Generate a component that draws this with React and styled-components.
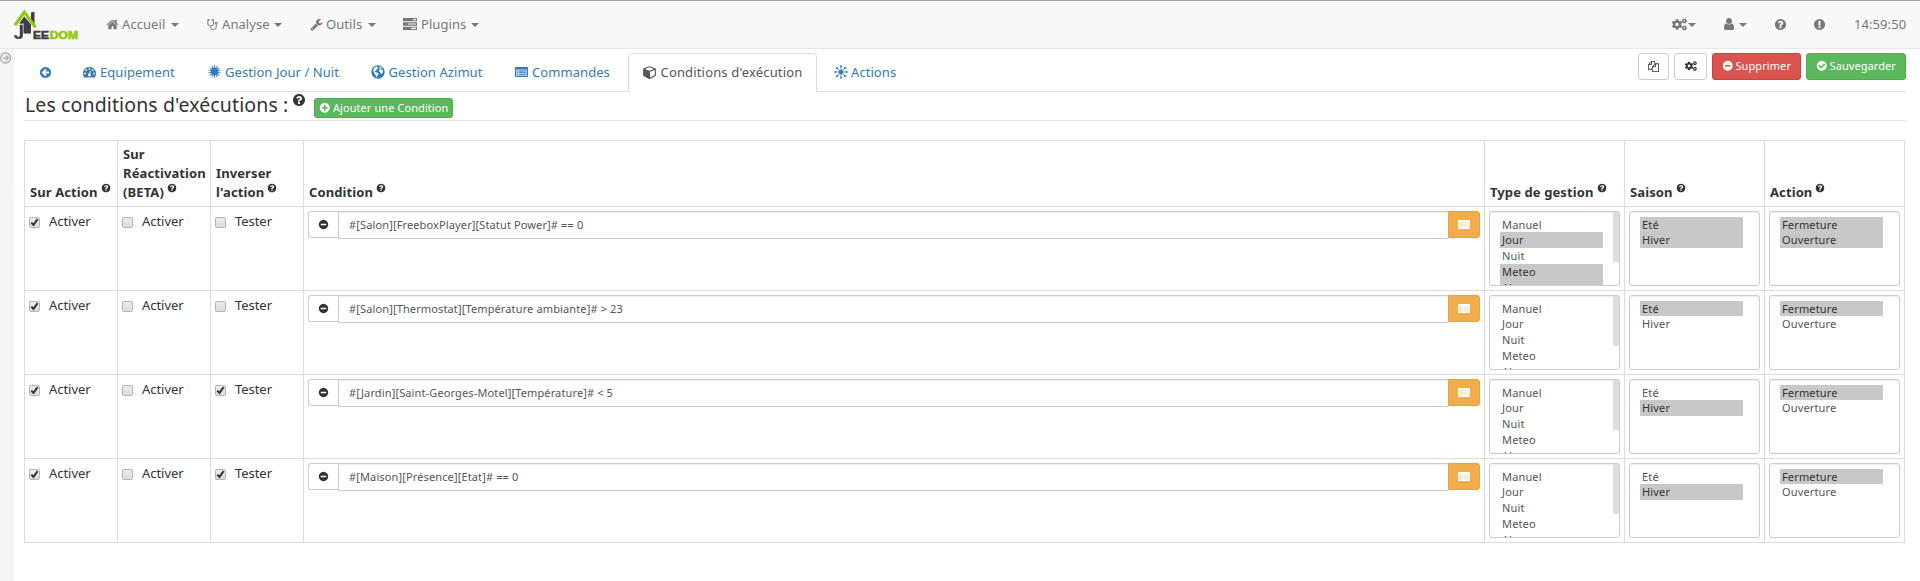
import React from 'react';
import styled, { createGlobalStyle, css } from 'styled-components';
import { FaCogs } from 'react-icons/fa';

const GlobalStyle = createGlobalStyle`
  *, *::before, *::after { box-sizing: border-box; }
  body {
    margin: 0;
    background: #fff;
    color: #333;
    font-family: "Noto Sans", "Open Sans", sans-serif;
    font-size: 13px;
    line-height: 19px;
    letter-spacing: 0.07px;
    overflow: hidden;
  }
`;

/* ---------- icons ---------- */

const Svg = styled.svg`
  display: block;
  flex: none;
  fill: currentColor;
`;

const DISC = 'M1664 896q0 209-103 385.5t-279.5 279.5-385.5 103-385.5-103-279.5-279.5-103-385.5 103-385.5 279.5-279.5 385.5-103 385.5 103 279.5 279.5 103 385.5z';

const GLYPHS = {
  home: 'M1472 992v480q0 26-19 45t-45 19h-384v-384h-256v384h-384q-26 0-45-19t-19-45v-480q0-1 .5-3t.5-3l575-474 575 474q1 2 1 6zm223-69l-62 74q-8 9-21 11h-3q-13 0-21-7l-692-577-692 577q-12 8-24 7-13-2-21-11l-62-74q-8-10-7-23.5t11-21.5l719-599q32-26 76-26t76 26l244 204v-195q0-14 9-23t23-9h192q14 0 23 9t9 23v408l219 182q10 8 11 21.5t-7 23.5z',
  stethoscope: 'M1472 704q0-26-19-45t-45-19-45 19-19 45 19 45 45 19 45-19 19-45zm128 0q0 60-35 110t-93 71v395q0 159-131 271.5t-317 112.5-317-112.5-131-271.5v-132q-164-20-274-128t-110-252v-512q0-26 19-45t45-19q6 0 16 2 17-30 47-48t65-18q53 0 90.5 37.5t37.5 90.5-37.5 90.5-90.5 37.5q-33 0-64-18v402q0 106 94 181t226 75 226-75 94-181v-402q-31 18-64 18-53 0-90.5-37.5t-37.5-90.5 37.5-90.5 90.5-37.5q35 0 65 18t47 48q10-2 16-2 26 0 45 19t19 45v512q0 144-110 252t-274 128v132q0 106 94 181t226 75 226-75 94-181v-395q-58-21-93-71t-35-110q0-80 56-136t136-56 136 56 56 136z',
  wrench: 'M448 1472q0-26-19-45t-45-19-45 19-19 45 19 45 45 19 45-19 19-45zm644-420l-682 682q-37 37-90 37-52 0-91-37l-106-108q-38-36-38-90 0-53 38-91l681-681q39 98 114.5 173.5t173.5 114.5zm634-435q0 39-23 106-47 134-164.5 217.5t-258.5 83.5q-185 0-316.5-131.5t-131.5-316.5 131.5-316.5 316.5-131.5q58 0 121.5 16.5t107.5 46.5q16 11 16 28t-16 28l-293 169v224l193 107q5-3 79-48.5t135.5-81 70.5-35.5q15 0 23.5 10t8.5 25z',
  user: 'M1536 1399q0 109-62.5 187t-150.5 78h-854q-88 0-150.5-78t-62.5-187q0-85 8.5-160.5t31.5-152 58.5-131 94-89 134.5-34.5q131 128 313 128t313-128q76 0 134.5 34.5t94 89 58.5 131 31.5 152 8.5 160.5zm-256-887q0 159-112.5 271.5t-271.5 112.5-271.5-112.5-112.5-271.5 112.5-271.5 271.5-112.5 271.5 112.5 112.5 271.5z',
  question: 'M1024 1376v-192q0-14-9-23t-23-9h-192q-14 0-23 9t-9 23v192q0 14 9 23t23 9h192q14 0 23-9t9-23zm256-672q0-88-55.5-163t-138.5-116-170-41q-243 0-371 213-15 24 8 42l132 100q7 6 19 6 16 0 25-12 53-68 86-92 34-24 86-24 48 0 85.5 26t37.5 59q0 38-20 61t-68 45q-63 28-115.5 86.5t-52.5 125.5v36q0 14 9 23t23 9h192q14 0 23-9t9-23q0-19 21.5-49.5t54.5-49.5q32-18 49-28.5t46-35 44.5-48 28-60.5 12.5-81z' + DISC,
  exclamation: 'M1024 1375v-190q0-14-9-23.5t-22-9.5h-192q-13 0-23 10t-10 23v190q0 13 10 23t23 10h192q13 0 22-9.5t9-23.5zm-2-344l18-621q0-12-10-18-10-8-24-8h-220q-14 0-24 8-10 6-10 18l17 621q0 10 10 17.5t24 7.5h185q14 0 23.5-7.5t10.5-17.5z' + DISC,
  plus: 'M1344 960v-128q0-26-19-45t-45-19h-256v-256q0-26-19-45t-45-19h-128q-26 0-45 19t-19 45v256h-256q-26 0-45 19t-19 45v128q0 26 19 45t45 19h256v256q0 26 19 45t45 19h128q26 0 45-19t19-45v-256h256q26 0 45-19t19-45z' + DISC,
  minus: 'M1344 960v-128q0-26-19-45t-45-19h-768q-26 0-45 19t-19 45v128q0 26 19 45t45 19h768q26 0 45-19t19-45z' + DISC,
  check: 'M1412 734q0-28-18-46l-91-90q-19-19-45-19t-45 19l-408 407-226-226q-19-19-45-19t-45 19l-91 90q-18 18-18 46 0 27 18 45l362 362q19 19 45 19 27 0 46-19l543-543q18-18 18-45z' + DISC,
  back: 'M1408 960v-128q0-26-19-45t-45-19h-502l189-189q19-19 19-45t-19-45l-91-91q-18-18-45-18t-45 18l-362 362-91 91q-18 18-18 45t18 45l91 91 362 362q18 18 45 18t45-18l91-91q18-18 18-45t-18-45l-189-189h502q26 0 45-19t19-45z' + DISC,
  files: 'M1696 384q40 0 68 28t28 68v1216q0 40-28 68t-68 28h-960q-40 0-68-28t-28-68v-288h-544q-40 0-68-28t-28-68v-672q0-40 20-88t48-76l408-408q28-28 76-48t88-20h416q40 0 68 28t28 68v328q68-40 128-40h416zm-544 213l-299 299h299v-299zm-640-384l-299 299h299v-299zm196 647l316-316v-416h-384v416q0 40-28 68t-68 28h-416v640h512v-256q0-40 20-88t48-76zm956 804v-1152h-384v416q0 40-28 68t-68 28h-416v640h896z',
};

const Glyph = ({ name, size = 14 }) => (
  <Svg width={size} height={size} viewBox="0 0 1792 1792">
    <path fillRule="evenodd" d={GLYPHS[name]} />
  </Svg>
);

const TasksIcon = () => (
  <Svg width="14" height="12" viewBox="0 0 14 12">
    <path fillRule="evenodd" d="M.5 0h13q.5 0 .5.5v2.3q0 .5-.5.5H.5q-.5 0-.5-.5V.5Q0 0 .5 0zM10 1.1v1.1h3V1.1zM.5 4.3h13q.5 0 .5.5v2.4q0 .5-.5.5H.5q-.5 0-.5-.5V4.8q0-.5.5-.5zM5 5.5v1h8v-1zM.5 8.7h13q.5 0 .5.5v2.3q0 .5-.5.5H.5q-.5 0-.5-.5V9.2q0-.5.5-.5zM8 9.8v1.1h5V9.8z" />
  </Svg>
);

const ListIcon = ({ width = 13, height = 10, tint = 0.25 }) => (
  <Svg width={width} height={height} viewBox="0 0 13 10" preserveAspectRatio="none">
    <path opacity={tint} d="M1 2h11v7.500H1z" />
    <path fillRule="evenodd" d="M1 0h11q1 0 1 1v8q0 1-1 1H1q-1 0-1-1V1q0-1 1-1zM1 2.6V9h11V2.6z" />
    <path d="M1.7 3.4h1.2v1H1.7zM3.8 3.4h7.5v1H3.8zM1.7 5.3h1.2v1H1.7zM3.8 5.3h7.5v1H3.8zM1.7 7.2h1.2v1H1.7zM3.8 7.2h7.5v1H3.8z" />
  </Svg>
);

const GaugeIcon = () => (
  <Svg width="13" height="11" viewBox="0 0 13 11">
    <path fillRule="evenodd" d="M6.5 0A6.5 6.5 0 0 0 1 10q.3.5.8.5h9.4q.5 0 .8-.5A6.5 6.5 0 0 0 6.5 0zM5.6 1.85a.9.9 0 1 0 1.8 0a.9.9 0 1 0-1.8 0zM2.35 3.2a.9.9 0 1 0 1.8 0a.9.9 0 1 0-1.8 0zM8.85 3.2a.9.9 0 1 0 1.8 0a.9.9 0 1 0-1.8 0zM1 6.5a.9.9 0 1 0 1.8 0a.9.9 0 1 0-1.8 0zM10.2 6.5a.9.9 0 1 0 1.8 0a.9.9 0 1 0-1.8 0zM7 3.8l.9.2-.7 2.8a1.4 1.4 0 1 1-.9-.2z" />
  </Svg>
);

const GlobeIcon = () => (
  <Svg width="14" height="14" viewBox="0 0 14 14">
    <circle cx="7" cy="7" r="6.7" />
    <path fill="#fff" d="M2.9 3.3Q4 2 5.4 1.5l1.3.6-.5.9.9.3-1.4 1.5-1 .3.3.8-1.1-.1.2 1.1.9.3 1.5.6 1.2 1-.8 1.3-.9.8-.3 1.6-.8-.8-.3-2-1.1-1-.3-1.3-1-1.3zM8.6 1.4q2 .5 3.2 2l-.8.2-1-.6-.8.9.6.9 1.3-.2.9 1-.3 1.9-.9 1.5-.8.1-.5-1.7-1.2-.6-.2-1.5 1-1.2-.9-.8z" />
  </Svg>
);

const CubeIcon = () => (
  <Svg width="13" height="13" viewBox="0 0 13 13">
    <path fillRule="evenodd" d="M6.5.2L12.3 2.3q.6.3.6.9v6q0 .6-.5.9L7 12.9q-.5.2-1 0L.6 10.1Q.1 9.8.1 9.2v-6q0-.6.6-.9zM6.5 1.3L1.9 3l4.6 1.7L11.1 3zM7.1 5.7v5.8l4.7-2.4V4z" />
  </Svg>
);

const rays = (n) => Array.from({ length: n }, (_, i) => (i * 360) / n);

const SunIcon = () => (
  <Svg width="13" height="13" viewBox="0 0 13 13">
    <circle cx="6.5" cy="6.5" r="3.7" />
    {rays(14).map((a) => (
      <path key={a} d="M5.9 3.3L6.2 0h.6L7.1 3.3z" transform={`rotate(${a} 6.5 6.5)`} />
    ))}
  </Svg>
);

const ActionIcon = () => (
  <Svg width="14" height="14" viewBox="0 0 14 14">
    <circle cx="7" cy="7" r="2.3" />
    {rays(8).map((a) => (
      <g key={a} transform={`rotate(${a} 7 7)`}>
        <path d="M6.6 1h.8v4h-.8z" />
        <circle cx="7" cy="1.3" r="1" />
      </g>
    ))}
  </Svg>
);

const LogoWord = styled.text`
  font: 900 10.8px "Liberation Sans", Arial, sans-serif;
  letter-spacing: 0;
  stroke: currentColor;
  stroke-width: 0.7px;
  fill: currentColor;
  color: ${(p) => p.$color};
`;

const Logo = () => (
  <Svg width="65" height="31" viewBox="14 9 65 31">
    <path fill="#3f3d43" d="M31 12.500l3.500-.7V24H31zM20.500 21.500L24.300 16.500 31 24.500V33.500H23.500V23.500z" />
    <path fill="#3f3d43" d="M19.800 22h3v1.700h-3zM19.800 24.700h3v11q0 3.300-4.200 3.300-4.500 0-4.500-3.800h2.700q0 1.800 1.600 1.800 1.400 0 1.400-1.700z" />
    <path fill="none" stroke="#93c90e" strokeWidth="3.200" d="M15 25.200L24.300 12.300 35.600 27.400" />
    <LogoWord $color="#3f3d43" x="33" y="38.600" textLength="16" lengthAdjust="spacingAndGlyphs">EE</LogoWord>
    <LogoWord $color="#93c90e" x="49.800" y="38.600" textLength="28.300" lengthAdjust="spacingAndGlyphs">DOM</LogoWord>
  </Svg>
);

/* ---------- top bar ---------- */

const Navbar = styled.nav`
  display: flex;
  height: 49px;
  padding: 0 14px 0 14px;
  background: #f8f8f8;
  border-top: 1px solid #a3a1a3;
  border-bottom: 1px solid #e7e7e7;
  color: #777;
`;

const Brand = styled.a`
  display: flex;
  width: 92px;
  padding-top: 8px;
`;

const NavMenu = styled.div`
  display: grid;
  grid-template-columns: 100px 104px 93px 90px;
  flex: 1;
`;

const NavItem = styled.a`
  display: flex;
  align-items: center;
  padding-bottom: 1px;
`;

const IconSlot = styled.span`
  display: flex;
  width: ${(p) => p.$w || 16}px;
  padding-bottom: ${(p) => p.$lift || 0}px;
`;

const Caret = styled.span`
  margin: 1px 0 0 ${(p) => p.$gap}px;
  border-top: 4px solid;
  border-left: 4px solid transparent;
  border-right: 4px solid transparent;
`;

const NavTools = styled.div`
  display: grid;
  grid-template-columns: 50px 52px 39px 41px 52px;
`;

/* ---------- page ---------- */

const Page = styled.div`
  display: flex;
  height: 532px;
`;

const Sidebar = styled.aside`
  width: 14px;
  padding-top: 3px;
  background: #f5f5f5;
`;

const Toggle = styled.svg`
  display: block;
  fill: none;
  stroke: #b0b0b0;
`;

const Content = styled.main`
  flex: 1;
  padding: 4px 14px 0 10px;
`;

const TabBar = styled.div`
  display: flex;
  justify-content: space-between;
  height: 39px;
  border-bottom: 1px solid #ddd;
`;

const Tabs = styled.div`
  display: grid;
  grid-template-columns: 43px 125px 163px 144px 129px 191px 110px;
  height: 39px;
`;

const Tab = styled.a`
  display: flex;
  align-items: center;
  padding: 0 0 1px ${(p) => p.$pad || 16}px;
  color: #337ab7;
  ${(p) =>
    p.$active &&
    css`
      margin-right: 2px;
      padding-left: 14px;
      background: #fff;
      border: 1px solid #ddd;
      border-bottom: 0;
      border-radius: 4px 4px 0 0;
      color: #555;
      letter-spacing: 0.16px;
    `}
`;

const Buttons = styled.div`
  display: grid;
  grid-template-columns: 31px 33px 89px 100px;
  gap: 5px;
  height: 27px;
`;

const KINDS = {
  plain: ['#fff', '#ccc', '#333'],
  danger: ['#d9534f', '#d43f3a', '#fff'],
  success: ['#5cb85c', '#4cae4c', '#fff'],
  warning: ['#f0ad4e', '#eea236', '#fff'],
};

const Button = styled.button`
  display: flex;
  align-items: center;
  justify-content: center;
  gap: 2px;
  height: ${(p) => p.$h || 27}px;
  padding: 0 ${(p) => p.$pad || 0}px 1px;
  background: ${(p) => KINDS[p.$kind][0]};
  border: 1px solid ${(p) => KINDS[p.$kind][1]};
  border-radius: 3px;
  color: ${(p) => KINDS[p.$kind][2]};
  font: 11px/16px "Noto Sans", sans-serif;
  letter-spacing: 0.08px;
  white-space: nowrap;
`;

const MinusButton = styled(Button)`
  width: 30px;
  border-right: 0;
  border-radius: 3px 0 0 3px;
`;

const PickButton = styled(Button)`
  width: 32px;
  border-radius: 0 3px 3px 0;
`;

const Legend = styled.header`
  display: flex;
  height: 29px;
  margin-bottom: 19px;
  padding-left: 1px;
  border-bottom: 1px solid #e5e5e5;
`;

const LegendTitle = styled.h1`
  margin: 0 4px 0 0;
  font-size: 19.5px;
  font-weight: 400;
  line-height: 26px;
  letter-spacing: 0.12px;
`;

const LegendHelp = styled.span`
  margin: 1px 8px 0 0;
`;

const LegendAction = styled.div`
  padding-top: 6px;
`;

/* ---------- table ---------- */

const Table = styled.div`
  display: grid;
  grid-template-columns: 93px 93px 93px 1181px 140px 140px 140px;
  grid-template-rows: 66px repeat(4, 84px);
  width: 1881px;
  border-top: 1px solid #ddd;
  border-left: 1px solid #ddd;
`;

const HeadCell = styled.div`
  display: flex;
  align-items: flex-end;
  padding: 0 0 4px 5px;
  border-right: 1px solid #ddd;
  border-bottom: 1px solid #ddd;
  font-weight: 700;
  letter-spacing: 0.1px;
  white-space: pre-line;
`;

const HelpMark = styled.sup`
  display: inline-block;
  margin-left: 3px;
  vertical-align: 4px;
  line-height: 0;
`;

const Cell = styled.div`
  padding: 4px;
  border-right: 1px solid #ddd;
  border-bottom: 1px solid #ddd;
`;

const CheckLabel = styled.label`
  display: flex;
  align-items: center;
  gap: 9px;
  height: 21px;
  letter-spacing: -0.05px;
`;

const CheckBox = styled.span`
  display: flex;
  align-items: center;
  justify-content: center;
  width: 11px;
  height: 11px;
  margin-top: 2px;
  background: linear-gradient(#ececec, #dcdcdc);
  border: 1px solid #b4b4b4;
  border-radius: 2px;
`;

const CheckTick = styled.svg`
  flex: none;
  fill: none;
  stroke: #333;
  stroke-width: 2;
`;

const InputGroup = styled.div`
  display: flex;
`;

const Expression = styled.div`
  flex: 1;
  height: 28px;
  padding: 0 10px;
  background: #fff;
  border: 1px solid #ccc;
  border-right: 0;
  box-shadow: inset 0 1px 1px rgba(0, 0, 0, 0.075);
  color: #555;
  font-size: 11px;
  line-height: 26px;
  letter-spacing: 0.13px;
`;

const SelectBox = styled.div`
  display: flex;
  justify-content: space-between;
  width: 131px;
  height: 75px;
  padding-left: 10px;
  background: #fff;
  border: 1px solid #ccc;
  border-radius: 3px;
  box-shadow: inset 0 1px 1px rgba(0, 0, 0, 0.075);
  overflow: hidden;
`;

const Options = styled.div`
  width: 103px;
  padding-top: 5px;
`;

const Option = styled.div`
  height: 16px;
  padding-left: 2px;
  background: ${(p) => (p.$on ? '#c8c8c8' : 'transparent')};
  color: ${(p) => (p.$on ? '#333' : '#555')};
  font-size: 11px;
  line-height: 15.6px;
  letter-spacing: 0.15px;

  &:first-child {
    height: 15px;
  }
`;

const ScrollThumb = styled.div`
  width: 6px;
  height: 50px;
  background: #ddd;
`;

const Select = ({ options, selected, scroll }) => (
  <SelectBox>
    <Options>
      {options.map((o) => (
        <Option key={o} $on={selected.includes(o)}>{o}</Option>
      ))}
    </Options>
    {scroll && <ScrollThumb />}
  </SelectBox>
);

const Check = ({ on, children }) => (
  <Cell>
    <CheckLabel>
      <CheckBox>
        {on && (
          <CheckTick width="9" height="9" viewBox="0 0 9 9">
            <path d="M1.3 4.6L3.5 6.9L7.6 1.2" />
          </CheckTick>
        )}
      </CheckBox>
      {children}
    </CheckLabel>
  </Cell>
);

const HEADERS = ['Sur Action', 'Sur\nRéactivation\n(BETA)', "Inverser\nl'action", 'Condition', 'Type de gestion', 'Saison', 'Action'];

const TYPES = ['Manuel', 'Jour', 'Nuit', 'Meteo', 'Absence'];
const SEASONS = ['Eté', 'Hiver'];
const ACTIONS = ['Fermeture', 'Ouverture'];

const ROWS = [
  { invert: false, expr: '#[Salon][FreeboxPlayer][Statut Power]# == 0', types: ['Jour', 'Meteo', 'Absence'], seasons: SEASONS, actions: ACTIONS },
  { invert: false, expr: '#[Salon][Thermostat][Température ambiante]# > 23', types: [], seasons: ['Eté'], actions: ['Fermeture'] },
  { invert: true, expr: '#[Jardin][Saint-Georges-Motel][Température]# < 5', types: [], seasons: ['Hiver'], actions: ['Fermeture'] },
  { invert: true, expr: '#[Maison][Présence][Etat]# == 0', types: [], seasons: ['Hiver'], actions: ['Fermeture'] },
];

export default function App() {
  return (
    <>
      <GlobalStyle />
      <Navbar>
        <Brand><Logo /></Brand>
        <NavMenu>
          <NavItem><IconSlot><Glyph name="home" size={13} /></IconSlot>Accueil<Caret $gap={6} /></NavItem>
          <NavItem><IconSlot><Glyph name="stethoscope" size={13} /></IconSlot>Analyse<Caret $gap={4.5} /></NavItem>
          <NavItem><IconSlot><Glyph name="wrench" size={13} /></IconSlot>Outils<Caret $gap={6} /></NavItem>
          <NavItem><IconSlot $w={18}><TasksIcon /></IconSlot>Plugins<Caret $gap={5} /></NavItem>
        </NavMenu>
        <NavTools>
          <NavItem><FaCogs size={15} /><Caret $gap={1} /></NavItem>
          <NavItem><Glyph name="user" size={14} /><Caret $gap={3} /></NavItem>
          <NavItem><Glyph name="question" size={13} /></NavItem>
          <NavItem><Glyph name="exclamation" size={13} /></NavItem>
          <NavItem>14:59:50</NavItem>
        </NavTools>
      </Navbar>
      <Page>
        <Sidebar>
          <Toggle width="12" height="12" viewBox="0 0 12 12">
            <circle cx="5.5" cy="6" r="5" strokeWidth="1.4" />
            <path d="M2.5 6h5.5M5.8 3.5L8.3 6L5.8 8.5" strokeWidth="1.5" />
          </Toggle>
        </Sidebar>
        <Content>
          <TabBar>
            <Tabs>
              <Tab $pad={15}><Glyph name="back" size={13} /></Tab>
              <Tab><IconSlot $w={17}><GaugeIcon /></IconSlot>Equipement</Tab>
              <Tab><IconSlot $w={17} $lift={2}><SunIcon /></IconSlot>Gestion Jour / Nuit</Tab>
              <Tab><IconSlot $w={17.5}><GlobeIcon /></IconSlot>Gestion Azimut</Tab>
              <Tab><IconSlot $w={17}><ListIcon /></IconSlot>Commandes</Tab>
              <Tab $active><IconSlot $w={17.5}><CubeIcon /></IconSlot>Conditions d'exécution</Tab>
              <Tab $pad={15}><IconSlot $w={17} $lift={1}><ActionIcon /></IconSlot>Actions</Tab>
            </Tabs>
            <Buttons>
              <Button $kind="plain"><Glyph name="files" size={11} /></Button>
              <Button $kind="plain"><FaCogs size={12} /></Button>
              <Button $kind="danger"><Glyph name="minus" size={11.5} />Supprimer</Button>
              <Button $kind="success"><Glyph name="check" size={11.5} />Sauvegarder</Button>
            </Buttons>
          </TabBar>
          <Legend>
            <LegendTitle>Les conditions d'exécutions :</LegendTitle>
            <LegendHelp><Glyph name="question" size={14} /></LegendHelp>
            <LegendAction>
              <Button $kind="success" $h={20} $pad={4}><Glyph name="plus" size={11.5} />Ajouter une Condition</Button>
            </LegendAction>
          </Legend>
          <Table>
            {HEADERS.map((h) => (
              <HeadCell key={h}>
                <span>{h}<HelpMark><Glyph name="question" size={10} /></HelpMark></span>
              </HeadCell>
            ))}
            {ROWS.map((r) => (
              <React.Fragment key={r.expr}>
                <Check on>Activer</Check>
                <Check>Activer</Check>
                <Check on={r.invert}>Tester</Check>
                <Cell>
                  <InputGroup>
                    <MinusButton $kind="plain"><Glyph name="minus" size={11} /></MinusButton>
                    <Expression>{r.expr}</Expression>
                    <PickButton $kind="warning"><ListIcon width={12} height={9} tint={0.6} /></PickButton>
                  </InputGroup>
                </Cell>
                <Cell><Select options={TYPES} selected={r.types} scroll /></Cell>
                <Cell><Select options={SEASONS} selected={r.seasons} /></Cell>
                <Cell><Select options={ACTIONS} selected={r.actions} /></Cell>
              </React.Fragment>
            ))}
          </Table>
        </Content>
      </Page>
    </>
  );
}
